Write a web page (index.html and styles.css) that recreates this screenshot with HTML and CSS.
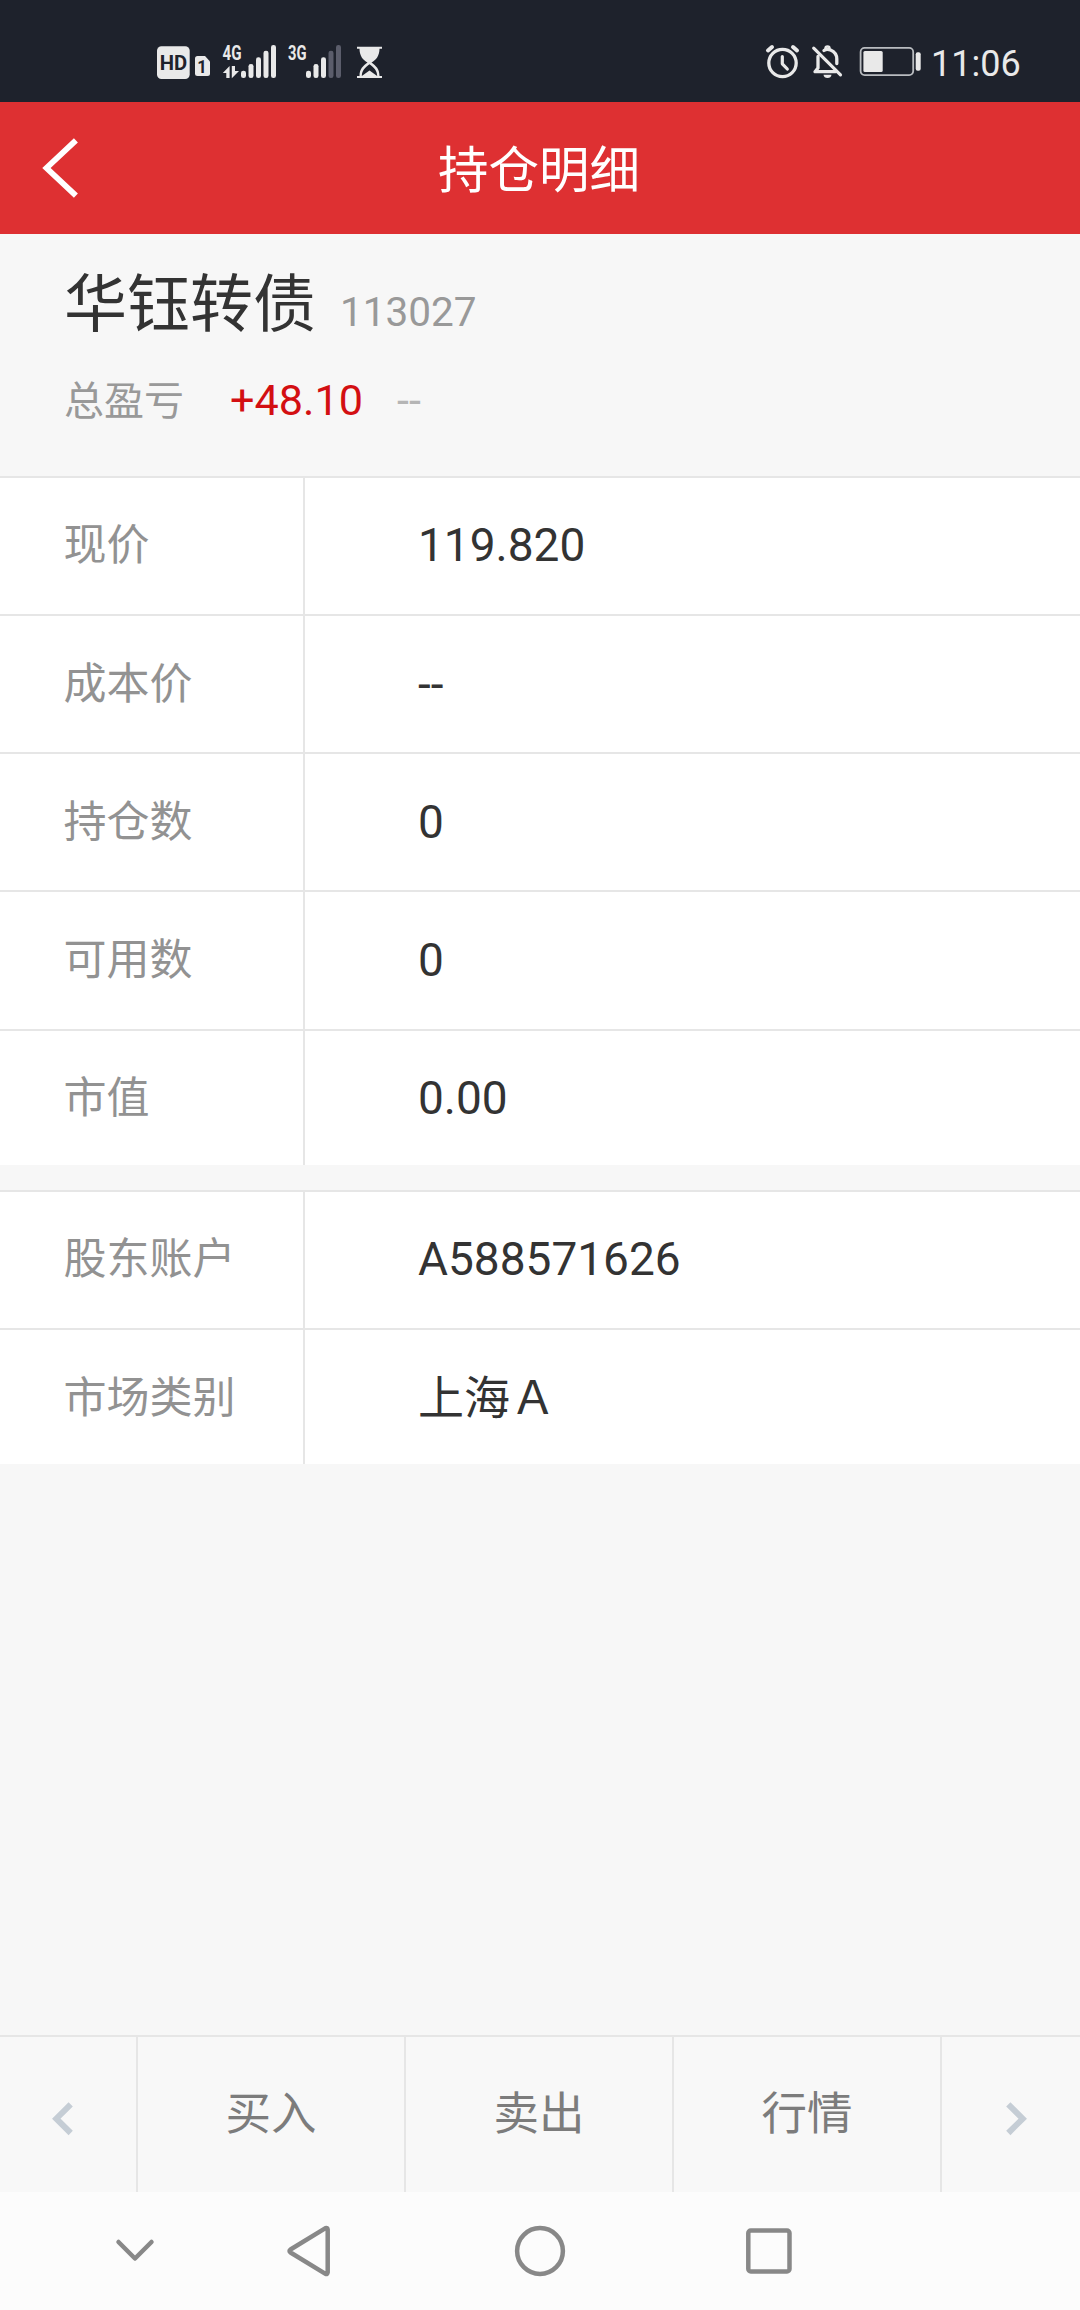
FILE: index.html
```html
<!DOCTYPE html>
<html lang="zh-CN">
<head>
<meta charset="utf-8">
<title>持仓明细</title>
<link rel="stylesheet" href="styles.css">
</head>
<body>
<div class="status">
  <svg class="status-left" width="230" height="40" viewBox="155 42 230 40">
    <rect x="157" y="46.3" width="32.7" height="32.7" rx="4.5" fill="#e9e9e9"/>
    <text class="badge" x="159.8" y="70" font-size="20.5" textLength="27.5" lengthAdjust="spacingAndGlyphs">HD</text>
    <path d="M197.500 56H205L210 61.500V73.500Q210 76 207.500 76H197.500Q195 76 195 73.500V58.500Q195 56 197.500 56Z" fill="#e9e9e9"/>
    <text class="badge" x="197.200" y="72.700" font-size="18.500" textLength="9.500" lengthAdjust="spacingAndGlyphs">1</text>
    <text class="net" x="222.600" y="60" font-size="20.500" textLength="19" lengthAdjust="spacingAndGlyphs">4G</text>
    <path d="M229.600 66V78H226.300V73H222.800ZM231.800 66H235V71H239L231.800 78.300Z" fill="#e9e9e9"/>
    <g fill="#e9e9e9">
      <rect x="241" y="70.700" width="5" height="7.300" rx="2.300"/><rect x="248.500" y="64" width="5" height="14" rx="2.300"/><rect x="256" y="57.300" width="5" height="20.700" rx="2.300"/><rect x="263.500" y="50.700" width="5" height="27.300" rx="2.300"/><rect x="271" y="45" width="5" height="33" rx="2.300"/>
      <rect x="306" y="70.700" width="5" height="7.300" rx="2.300"/><rect x="313.500" y="64" width="5" height="14" rx="2.300"/><rect x="321" y="57.300" width="5" height="20.700" rx="2.300"/>
    </g>
    <g fill="#5b5d6b"><rect x="328.500" y="50.700" width="5" height="27.300" rx="2.300"/><rect x="336" y="45" width="5" height="33" rx="2.300"/></g>
    <text class="net" x="288" y="60" font-size="20.500" textLength="18.500" lengthAdjust="spacingAndGlyphs">3G</text>
    <path d="M357 46.700H382V48.800H379.500C379.500 56 376 60 371.500 62.600C376 66 379.500 69 379.500 76H382V78H357V76H359.500C359.500 69 363 66 367.500 62.600C363 60 359.500 56 359.500 48.800H357Z" fill="#e9e9e9"/>
    <path d="M361.800 76C362 70.500 365 67.500 369.500 64.300C374 67.500 377 70.500 377.200 76L369.500 70.500Z" fill="#1e222c"/>
  </svg>
  <svg class="status-right" width="160" height="40" viewBox="764 42 160 40">
    <g fill="none" stroke="#e9e9e9" stroke-linecap="round" stroke-linejoin="round">
      <circle cx="782.500" cy="63" r="13.700" stroke-width="3.300"/>
      <path d="M782.300 56.500V63.800L787.300 69" stroke-width="3.200"/>
      <path d="M768 50.500L772 47M797 50.500L793 47" stroke-width="4"/>
      <path d="M813.700 48.200L840.500 74.800" stroke-width="3.200"/>
      <path d="M818 56.500V68L815 71.700H835.500M824 50.500C825.500 49.400 828 49 830.500 50C834.500 51.700 836.800 55 836.800 59V63.500" stroke-width="3.300"/>
      <path d="M825.500 48.500Q825.500 46.500 827.500 46.500T829.500 48.500" stroke-width="2.500"/>
    </g>
    <path d="M823.500 74.700H831.500Q831 78 827.500 78T823.500 74.700Z" fill="#e9e9e9"/>
    <rect x="860.600" y="47.900" width="52.600" height="27.200" rx="4" fill="none" stroke="#b9bcc0" stroke-width="1.800"/>
    <rect x="863.400" y="51" width="19.300" height="21" rx="1.500" fill="#e9e9e9"/>
    <rect x="915.700" y="52.300" width="5" height="18.500" rx="2" fill="#e9e9e9"/>
  </svg>
  <span class="clock">11:06</span>
</div>
<header class="header">
  <svg class="back" width="40" height="64" viewBox="40 136 40 64"><path d="M75.900 140.300L46.500 168L75.900 195.700" fill="none" stroke="#fff" stroke-width="5.800"/></svg>
  <h1 class="title">持仓明细</h1>
</header>
<section class="summary">
  <div class="stock"><span class="name">华钰转债</span><span class="code">113027</span></div>
  <div class="profit"><span class="profit-label">总盈亏</span><span class="profit-value">+48.10</span><span class="profit-rate">--</span></div>
</section>
<section class="group">
  <div class="row"><div class="label">现价</div><div class="value">119.820</div></div>
  <div class="row"><div class="label">成本价</div><div class="value">--</div></div>
  <div class="row"><div class="label">持仓数</div><div class="value">0</div></div>
  <div class="row"><div class="label">可用数</div><div class="value">0</div></div>
  <div class="row"><div class="label">市值</div><div class="value">0.00</div></div>
</section>
<section class="group">
  <div class="row"><div class="label">股东账户</div><div class="value">A588571626</div></div>
  <div class="row"><div class="label">市场类别</div><div class="value">上海Ａ</div></div>
</section>
<div class="actions">
  <div class="arrow arrow-prev"><svg width="24" height="36" viewBox="51 2101 24 36"><path d="M70.700 2104.400L56.300 2118.700L70.700 2133" fill="none" stroke="#c5cdd5" stroke-width="6"/></svg></div>
  <div class="action">买入</div>
  <div class="action">卖出</div>
  <div class="action">行情</div>
  <div class="arrow arrow-next"><svg width="24" height="36" viewBox="1004 2101 24 36"><path d="M1008.300 2104.400L1022.700 2118.700L1008.300 2133" fill="none" stroke="#c5cdd5" stroke-width="6"/></svg></div>
</div>
<nav class="navbar">
  <svg width="60" height="60" viewBox="-30 -30 60 60"><path d="M-16.500 -9L0 7.500L16.500 -9"/></svg>
  <svg width="60" height="60" viewBox="-30 -30 60 60"><path d="M17.700 -21.300V21.300Q17.500 23.500 15.500 22.800L-19.500 1.500Q-21.500 0 -19.500 -1.500L15.500 -22.800Q17.500 -23.500 17.700 -21.300Z"/></svg>
  <svg width="60" height="60" viewBox="-30 -30 60 60"><circle r="22.900"/></svg>
  <svg width="60" height="60" viewBox="-30 -30 60 60"><rect x="-20.700" y="-20.500" width="41.200" height="41" rx="2.500"/></svg>
</nav>
</body>
</html>
```
FILE: styles.css
```css
* { box-sizing: border-box; }
body {
  margin: 0;
  width: 1080px;
  height: 2310px;
  display: flex;
  flex-direction: column;
  background: #f7f7f7;
  color: #333;
  font-family: Roboto, "Noto Sans CJK SC", sans-serif;
}
svg { display: block; flex: none; }
.status {
  height: 102px;
  flex: none;
  display: flex;
  align-items: center;
  padding: 22px 0 0 155px;
  background: #1e222c;
  color: #e9e9e9;
}
.status-right { margin-left: 379px; }
.badge { font-family: Roboto, sans-serif; font-weight: 700; fill: #1e222c; }
.net { font-family: Roboto, sans-serif; font-weight: 700; fill: #e9e9e9; }
.clock { margin-left: 7px; padding-top: 3px; font-size: 36px; line-height: 40px; }
.header {
  height: 132px;
  flex: none;
  display: grid;
  grid-template-columns: 80px 1fr 80px;
  align-items: center;
  background: #de3032;
  color: #fff;
}
.back { margin-left: 40px; }
.title {
  margin: 0;
  padding: 6px 2px 0 0;
  text-align: center;
  font-size: 50.5px;
  font-weight: 400;
  line-height: 70px;
}
.summary { height: 242px; flex: none; padding: 31px 64px 0; }
.stock { display: flex; align-items: baseline; height: 88px; line-height: 80px; }
.name { font-size: 63px; }
.code { margin-left: 24px; font-size: 40.5px; color: #999; }
.profit { display: flex; align-items: baseline; line-height: 60px; padding-top: 18px; color: #999; }
.profit-label { width: 166px; font-size: 40px; }
.profit-value { width: 167px; font-size: 43.2px; color: #d30f12; }
.profit-rate { font-size: 43.2px; color: #b5b5b5; }
.group { flex: none; margin-bottom: 25px; background: #fff; }
.row { display: flex; height: 138px; line-height: 136px; border-top: 2px solid #e6e6e6; }
.row:first-child, .row:nth-child(5) { line-height: 134px; }
.row:nth-child(4) { height: 139px; }
.row:last-child { height: 136px; }
.label {
  width: 305px;
  padding-left: 63.5px;
  border-right: 2px solid #e6e6e6;
  font-size: 43px;
  color: #929292;
}
.value { padding-left: 113px; font-size: 46px; }
.actions {
  display: grid;
  grid-template-columns: 136px 268px 268px 268px 1fr;
  height: 157px;
  flex: none;
  margin-top: auto;
  border-top: 2px solid #e6e6e6;
  background: #f8f8f8;
}
.action { border-left: 2px solid #e6e6e6; text-align: center; font-size: 45.5px; line-height: 155px; color: #7c7c7c; }
.arrow { padding-top: 64px; }
.arrow-prev { padding-left: 51px; }
.arrow-next { padding-left: 62px; border-left: 2px solid #e6e6e6; }
.navbar {
  height: 118px;
  flex: none;
  display: flex;
  align-items: center;
  padding-left: 105px;
  background: #fcfcfc;
  fill: none;
  stroke: #888;
  stroke-width: 4.5px;
  stroke-linecap: round;
  stroke-linejoin: round;
}
.navbar svg:nth-child(2) { margin-left: 115px; }
.navbar svg:nth-child(3) { margin-left: 170px; }
.navbar svg:nth-child(4) { margin-left: 169px; }
```
